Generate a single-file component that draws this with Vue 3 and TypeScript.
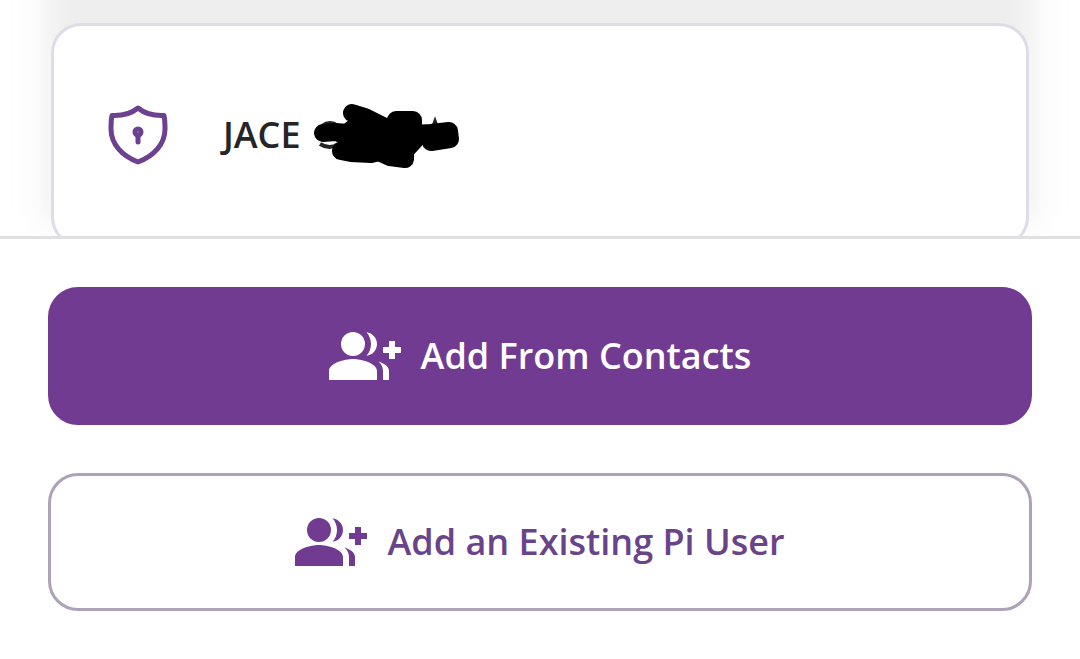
<script setup lang="ts">
interface Action {
  label: string
  kind: 'primary' | 'outline'
}

const contact = 'JACE'
const actions: Action[] = [
  { label: 'Add From Contacts', kind: 'primary' },
  { label: 'Add an Existing Pi User', kind: 'outline' },
]
</script>

<template>
  <main class="page">
    <section class="list">
      <article class="card">
        <svg class="shield" viewBox="0 0 60 60" aria-hidden="true">
          <path d="M30 3C24 8 16 11 4 10.500C3 15 3 20 3 24C3 39 14 51 30 57C46 51 57 39 57 24C57 20 57 15 56 10.500C44 11 36 8 30 3Z" />
          <circle cx="30" cy="27" r="3" />
          <path d="M30 31V37" />
        </svg>
        <p class="name">
          <span>{{ contact }}</span>
          <svg class="scribble" viewBox="0 -1 148 68" aria-hidden="true">
            <path class="trace" d="M9 24Q17 18 25 24M7 42Q17 48 25 42M118 31L122 20L126 31" />
            <path class="marker" d="M39 11L52 15L74 26M10 31L22 30L50 32M28 49L38 51L58 52L66 50L77 55L92 57L92 49L103 37M83 18H100V32M118 40L137 37L136 29L118 31L100 32" />
            <path class="body" d="M22 23L31 22L38 16L52 12L76 20L104 26L110 40L94 54L66 58L30 52L24 40L18 36Z" />
          </svg>
        </p>
      </article>
    </section>

    <footer class="actions">
      <button v-for="action in actions" :key="action.label" type="button" class="action" :class="action.kind">
        <svg class="people" viewBox="0 0 24 16" aria-hidden="true">
          <circle cx="8" cy="4" r="4" />
          <path d="M22 5V3h-2v2h-2v2h2v2h2V7h2V5zM8 9c-2.670 0-8 1.340-8 4v3h16v-3c0-2.660-5.330-4-8-4zM12.510.05C13.430 1.110 14 2.490 14 4s-.57 2.890-1.490 3.950C14.470 7.700 16 6.040 16 4S14.470.3 12.510.05zM16.530 9.830C17.420 10.660 18 11.700 18 13v3h2v-3c0-1.450-1.590-2.510-3.470-3.170z" />
        </svg>
        <span>{{ action.label }}</span>
      </button>
    </footer>
  </main>
</template>

<style>
body {
  margin: 0;
  background: #fff;
}
</style>

<style scoped>
.page {
  display: flex;
  flex-direction: column;
  height: 100vh;
  font-family: "Open Sans", "Noto Sans", sans-serif;
}

.list {
  position: relative;
  flex: 1;
  min-height: 0;
  overflow: hidden;
  padding: 23px 51px 0;
}

.list::before {
  content: "";
  position: absolute;
  inset: -60px 46px 12px;
  background: #eeeeef;
  filter: blur(16px);
}

.card {
  position: relative;
  display: flex;
  align-items: center;
  gap: 55px;
  padding: 75px 54px;
  border: 3px solid #e0dbe9;
  border-radius: 30px;
  background: #fff;
}

.shield {
  flex: none;
  width: 60px;
  height: 60px;
  fill: none;
  stroke: #6d4190;
  stroke-width: 5;
  stroke-linecap: round;
  stroke-linejoin: round;
}

.name {
  display: flex;
  align-items: center;
  gap: 12px;
  margin: 0;
  color: #252527;
  font-size: 36px;
  line-height: 66px;
  font-weight: 600;
}

.scribble {
  width: 148px;
  height: 68px;
}

.trace {
  fill: none;
  stroke: #252527;
  stroke-width: 4;
}

.marker {
  fill: none;
  stroke: #000;
  stroke-width: 18;
  stroke-linecap: round;
  stroke-linejoin: round;
}

.body {
  fill: #000;
}

.actions {
  display: flex;
  flex-direction: column;
  gap: 48px;
  padding: 48px;
  border-top: 3px solid #e0dfe1;
  background: #fff;
}

.action {
  display: flex;
  align-items: center;
  justify-content: center;
  gap: 20px;
  width: 100%;
  padding: 42px 24px;
  border: 3px solid #713b91;
  border-radius: 30px;
  font-family: inherit;
  font-size: 36px;
  font-weight: 600;
  line-height: 48px;
  cursor: pointer;
}

.primary {
  background: #713b91;
  color: #fff;
}

.outline {
  border-color: #aea2b9;
  background: #fff;
  color: #69448a;
}

.people {
  flex: none;
  width: 72px;
  height: 48px;
  fill: currentColor;
}

.outline .people {
  fill: #713b91;
}
</style>
